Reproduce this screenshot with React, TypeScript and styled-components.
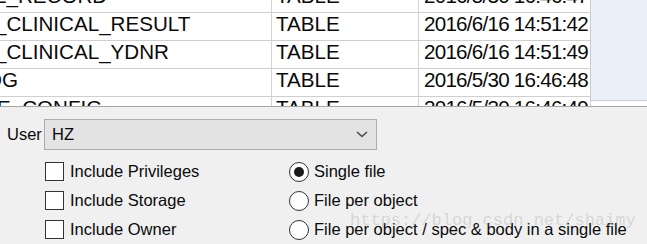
import React from "react";
import styled, { createGlobalStyle } from "styled-components";

const Global = createGlobalStyle`
  html, body { margin: 0; padding: 0; background: #f0f0f0; }
  body { width: 647px; height: 244px; overflow: hidden; }
  #root { width: 647px; height: 244px; }
`;

const Window = styled.div`
  position: relative;
  width: 647px;
  height: 244px;
  overflow: hidden;
  display: flex;
  flex-direction: column;
  background: #f0f0f0;
`;

const GridArea = styled.div`
  height: 106px;
  flex: none;
  display: flex;
  background: #ffffff;
  border-bottom: 1px solid #a7a7a7;
  overflow: hidden;
`;

const Grid = styled.div`
  width: 591px;
  flex: none;
  overflow: hidden;
`;

const Rows = styled.div`
  margin-top: -15px;
  display: flex;
  flex-direction: column;
`;

const Row = styled.div`
  display: grid;
  grid-template-columns: 272px 147px 172px;
  height: 27px;
  border-bottom: 1px solid #cfcfcf;
`;

const Cell = styled.div`
  overflow: hidden;
  white-space: nowrap;
  font-family: "Liberation Sans", Arial, sans-serif;
  font-size: 20.6px;
  line-height: 21px;
  color: #0a0a0a;
  border-right: 1px solid #d3d3d3;
`;

const NameCell = styled(Cell)<{ $shift: number }>`
  & > span {
    display: inline-block;
    margin-left: ${(p) => p.$shift}px;
  }
`;

const TypeCell = styled(Cell)`
  padding-left: 4px;
`;

const DateCell = styled(Cell)`
  padding-left: 5px;
  letter-spacing: -0.75px;
`;

const SidePane = styled.div`
  flex: 1;
  height: 100px;
  background: #e9eef7;
  box-shadow: 0 1px 1px rgba(0, 0, 0, 0.18);
`;

const Panel = styled.div`
  flex: 1;
  display: flex;
  flex-direction: column;
  padding: 12px 0 0 7px;
  font-family: "Liberation Sans", Arial, sans-serif;
  font-size: 16.5px;
  color: #0a0a0a;
`;

const UserRow = styled.div`
  display: flex;
  align-items: center;
  height: 31px;
`;

const Label = styled.div`
  width: 37px;
`;

const Combo = styled.div`
  box-sizing: border-box;
  width: 333px;
  height: 31px;
  display: flex;
  align-items: center;
  justify-content: space-between;
  padding: 0 8px 0 7px;
  background: #e3e3e3;
  border: 1px solid #adadad;
`;

const Options = styled.div`
  display: grid;
  grid-template-columns: 244px 1fr;
  grid-auto-rows: 29px;
  margin-top: 7px;
  margin-left: 38px;
`;

const Option = styled.div`
  display: flex;
  align-items: center;
  gap: 6px;
  white-space: nowrap;
`;

const RadioOption = styled(Option)`
  gap: 5px;
`;

const Box = styled.span`
  box-sizing: border-box;
  width: 19px;
  height: 19px;
  flex: none;
  background: #ffffff;
  border: 1.5px solid #333;
`;

const Radio = styled.span<{ $on?: boolean }>`
  box-sizing: border-box;
  width: 20px;
  height: 20px;
  flex: none;
  border-radius: 50%;
  background: #ffffff;
  border: 1.5px solid #333;
  display: flex;
  align-items: center;
  justify-content: center;
  &::after {
    content: "";
    width: 10px;
    height: 10px;
    border-radius: 50%;
    background: ${(p) => (p.$on ? "#1a1a1a" : "transparent")};
  }
`;

const Watermark = styled.div`
  position: absolute;
  left: 350px;
  top: 211px;
  font-family: "Liberation Mono", "Courier New", monospace;
  font-size: 17px;
  color: rgba(150, 150, 150, 0.3);
  white-space: nowrap;
  pointer-events: none;
`;

const rows = [
  { name: "L_RECORD", shift: -5, type: "TABLE", date: "2016/5/30 16:46:47" },
  { name: "_CLINICAL_RESULT", shift: -5, type: "TABLE", date: "2016/6/16 14:51:42" },
  { name: "_CLINICAL_YDNR", shift: -5, type: "TABLE", date: "2016/6/16 14:51:49" },
  { name: "OG", shift: -14, type: "TABLE", date: "2016/5/30 16:46:48" },
  { name: "E_CONFIG", shift: -3, type: "TABLE", date: "2016/5/30 16:46:49" },
];

const checks = ["Include Privileges", "Include Storage", "Include Owner"];
const radios = [
  "Single file",
  "File per object",
  "File per object / spec & body in a single file",
];

export default function App() {
  return (
    <>
      <Global />
      <Window>
        <GridArea>
          <Grid>
            <Rows>
              {rows.map((r, i) => (
                <Row key={i}>
                  <NameCell $shift={r.shift}>
                    <span>{r.name}</span>
                  </NameCell>
                  <TypeCell>{r.type}</TypeCell>
                  <DateCell>{r.date}</DateCell>
                </Row>
              ))}
            </Rows>
          </Grid>
          <SidePane />
        </GridArea>
        <Panel>
          <UserRow>
            <Label>User</Label>
            <Combo>
              <span>HZ</span>
              <svg width="12" height="7" viewBox="0 0 12 7">
                <path d="M1 1 L6 5.5 L11 1" fill="none" stroke="#4a4a4a" strokeWidth="1.6" />
              </svg>
            </Combo>
          </UserRow>
          <Options>
            {checks.map((c, i) => (
              <React.Fragment key={c}>
                <Option>
                  <Box />
                  <span>{c}</span>
                </Option>
                <RadioOption>
                  <Radio $on={i === 0} />
                  <span>{radios[i]}</span>
                </RadioOption>
              </React.Fragment>
            ))}
          </Options>
        </Panel>
        <Watermark>https://blog.csdn.net/shaimy</Watermark>
      </Window>
    </>
  );
}
